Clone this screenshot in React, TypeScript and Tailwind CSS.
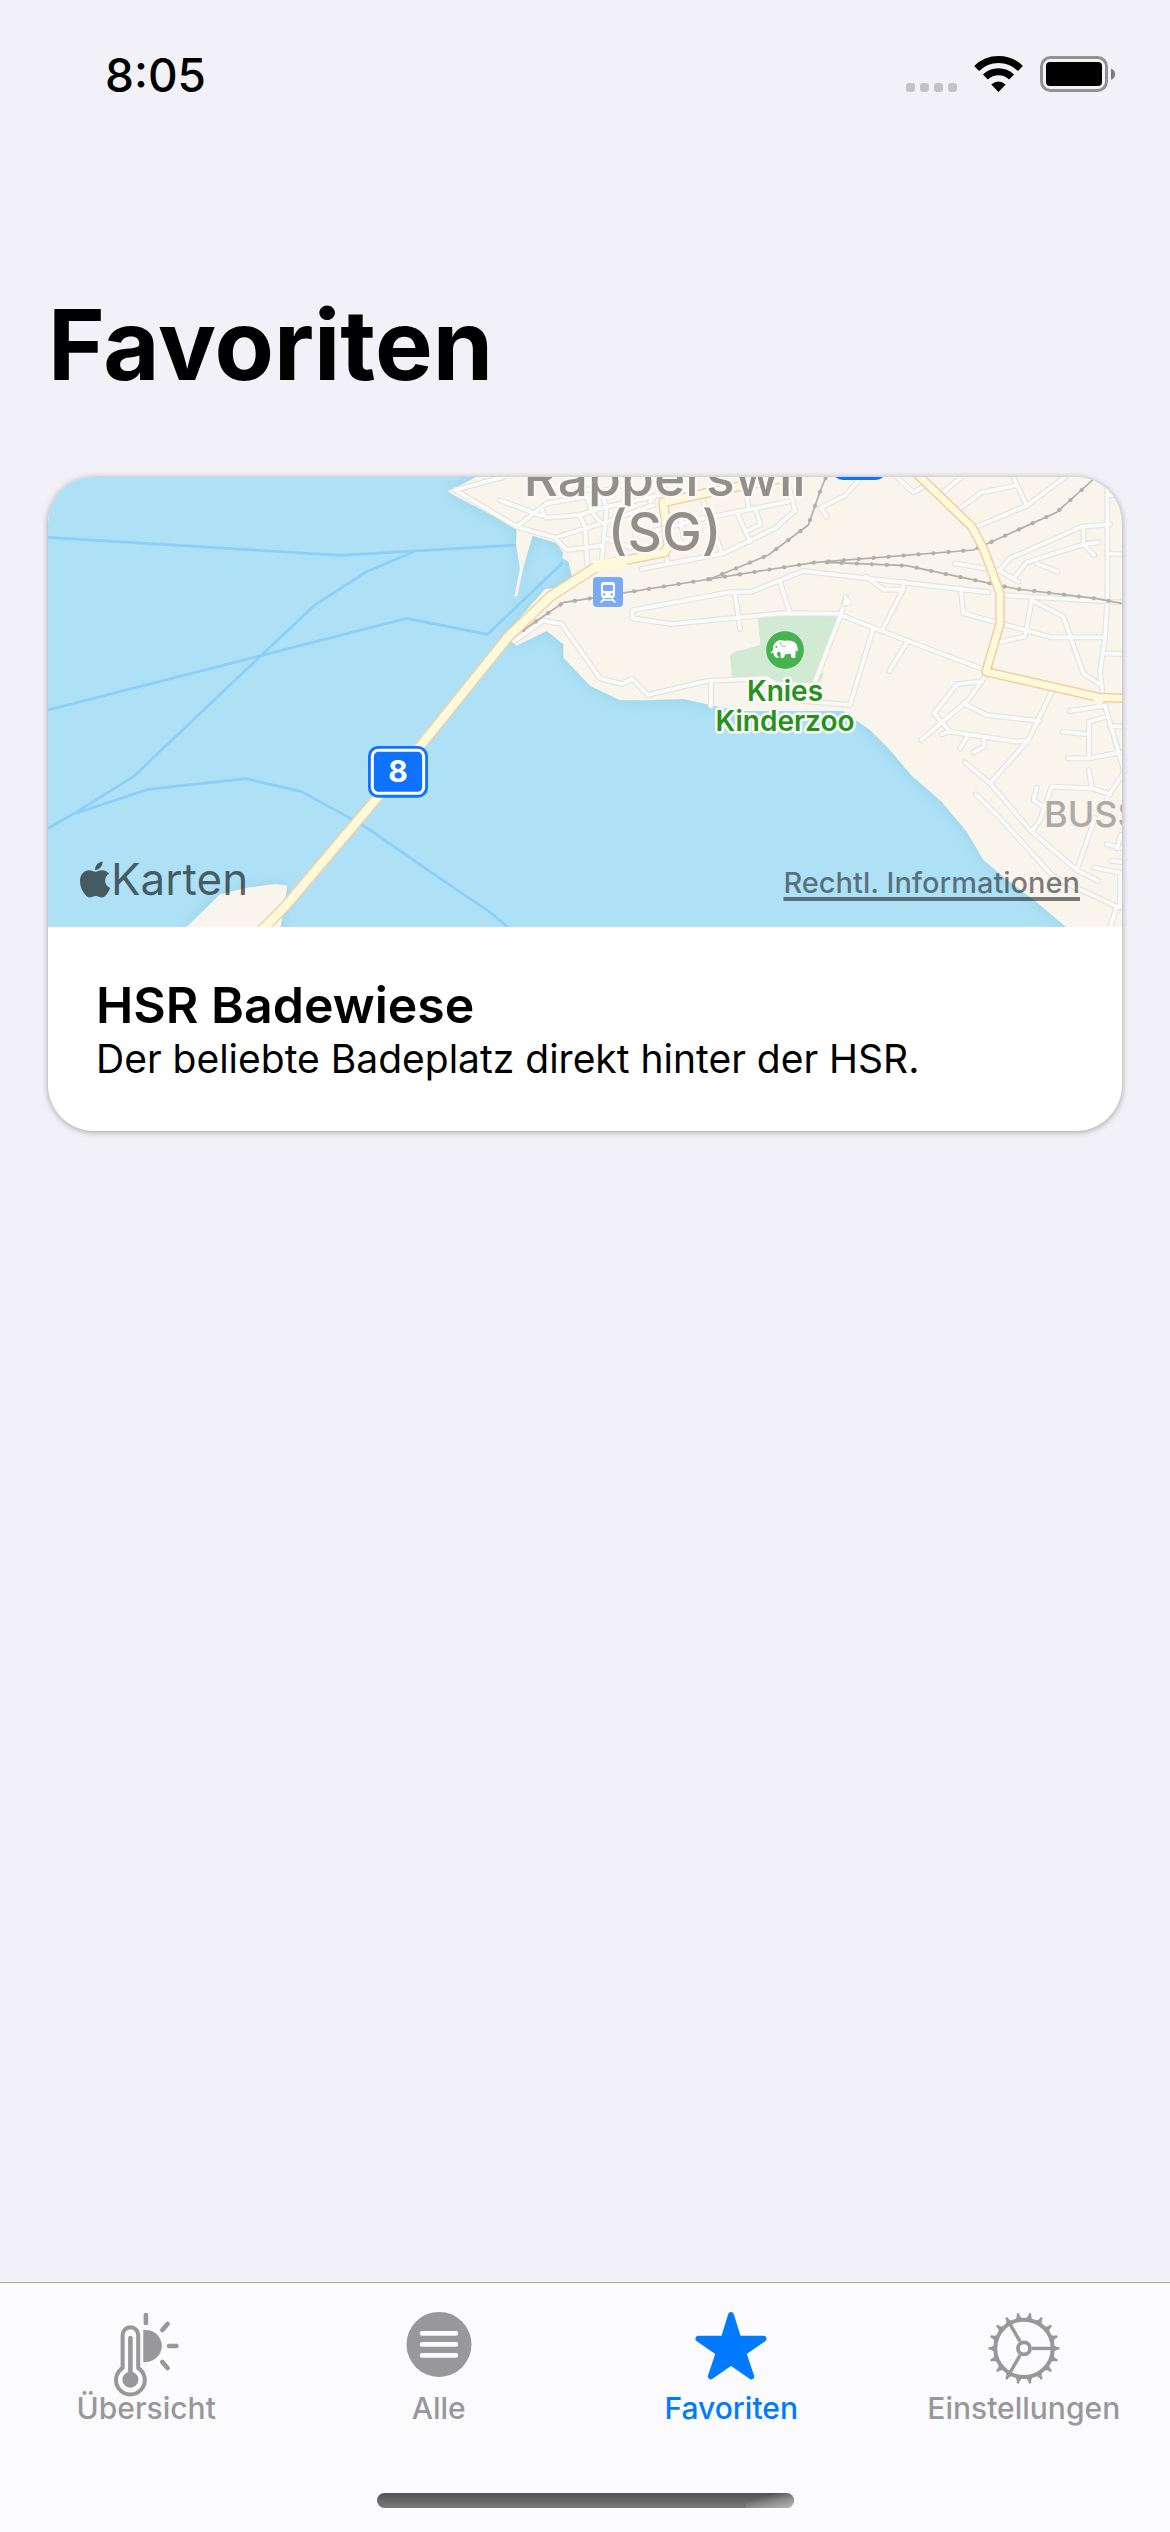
import type { ReactNode } from "react";
import { FaApple } from "react-icons/fa";

const MINOR_ROADS_CENTRE =
  "M250 36L105 75L290 185L405 218L440 255L545 242 M240 106L365 152 M290 185L380 115L500 95L620 55 M365 135L378 158L478 150L560 125L720 90 M478 150L495 185L502 300 M405 218L560 170L700 120 M500 90L515 140L540 170 M480 60L550 100L560 130L545 290 M555 220L640 250 M665 312L910 265L1065 190L1125 137L1105 60 M845 95L905 262 M880 155L1105 110 M950 140L990 230 M1005 130L1022 178L980 198 M975 60L985 125 M735 265L745 295 M780 150L790 215 M690 200L850 160 M690 110L760 36 M640 150L650 250 M283 528L370 467L425 477L540 640L605 657L637 642L683 690L860 648L1040 640L1065 655 M873 650L873 722 M1705 382L1150 318L995 380L925 382L637 436L637 460L755 477L1085 445L1262 446 M945 385L960 492 M1080 350L1108 440";

const MINOR_ROADS_EAST =
  "M228 396L212 450L120 690 M212 450L335 498L645 615 M288 335L342 374L400 374 M400 350L400 372L335 498 M310 488L240 720L100 708 M412 530L358 618 M572 370L580 445L690 475L845 517L1005 517 M690 390L1060 412 M785 405L765 515L690 530 M785 405L880 455L940 625L992 660 M1012 30L1012 410L1005 520L990 620L998 690 M1020 90L1060 90 M1012 265L1060 268 M1003 565L1060 567 M620 185L770 122L885 36 M770 122L730 36 M570 130L635 82L735 62 M515 85L575 36 M380 36L430 82L470 60 M275 36L225 92L152 128L170 155 M690 315L720 280L935 185L1020 178 M940 185L940 238L770 292L735 335 M940 238L985 232 M940 238L973 270 M800 295L863 320 M555 295L690 318L745 350 M648 630L595 705L453 825 M635 650L562 657L492 745L540 800 M515 808L540 800L740 830L775 825L850 670 M580 715L650 750L808 768 M592 815L570 850 M642 820L642 845L610 862 M775 825L660 955 M585 892L660 955L785 1100L920 1215L985 1248 M618 988L700 1070L850 1235L1040 1325L1020 1390 M1040 1325L1060 1328 M800 968L790 1005L820 1025 M785 1100L810 1065L845 965L965 970L1020 988 M957 915L965 970 M1060 925L1010 1000 M975 1060L920 1215 M1010 1138L1060 1150 M1052 1110L1042 1150 M1025 1188L1060 1192 M972 1208L1060 1225 M1050 1225L1050 1320 M900 738L1005 722L1060 910 M957 880L957 770L1010 755 M877 800L957 808 M893 880L957 880L1050 862 M1020 783L1060 785";

const LAND =
  "M180 30L105 68L82 78L100 90L290 190L288 240L300 310L283 395L292 392L312 300L338 212L410 235L430 265L427 280L445 290L456 335L410 368L375 372L255 510L290 542L380 498L430 538L430 578L510 662L600 706L680 706L790 702L880 722L960 738L1270 738L1350 795L1405 850L1475 932L1565 1010L1640 1100L1690 1185L1750 1235L1850 1312L1945 1392L2120 1392L2120 30Z";

const ISLAND = "M-706 1392L-600 1288L-520 1268L-435 1257L-398 1262L-419 1392Z";

const RAILS =
  "M310 495L430 413L870 342L1045 270L1165 180L1200 80L1218 36 M870 342L1180 293L1660 255L1910 142L2018 45 M1220 292L1460 302L1710 355L1790 372L2025 400L2106 415";

const FERRIES =
  "M-1116 217L-240 271L288 240 M-22 262L-160 320L-318 422L-475 570L-860 935L-1032 1042L-1116 1090 M-1116 735L-40 460L203 508L428 293 M-1032 1045L-815 973L-522 941L-355 980L-175 1078L60 1240L212 1343L270 1392";

function RoadShield() {
  return (
    <g>
      <rect x="-156" y="843" width="180" height="155" rx="30" fill="#0f73ff" />
      <rect x="-143" y="856" width="154" height="129" rx="18" fill="none" stroke="#fff" strokeWidth="9" />
      <text x="-66" y="951" textAnchor="middle" fontSize="90" fontWeight="700" fill="#fff">8</text>
    </g>
  );
}

function MapView() {
  return (
    <div className="relative h-[450px] overflow-hidden bg-[#aee1f6]">
      <svg
        className="h-full w-full"
        viewBox="-1116 36 3222 1350"
        preserveAspectRatio="xMidYMid slice"
        fontFamily="Inter, 'Liberation Sans', sans-serif"
        role="img"
        aria-label="Karte von Rapperswil (SG)"
      >
        <defs>
          <filter id="shore" x="-10%" y="-10%" width="120%" height="120%">
            <feGaussianBlur stdDeviation="22" />
          </filter>
        </defs>
        <path d={LAND + ISLAND} fill="#8fcfe0" opacity="0.75" filter="url(#shore)" />
        <path d={FERRIES} fill="none" stroke="#8dcff7" strokeWidth="8" strokeLinejoin="round" />
        <path d={LAND + ISLAND} fill="#f9f4ec" />
        <path d="M1012 455L1256 450L1180 655L1060 650L1040 636L936 640L930 572L945 560L1022 540Z M1200 625L1211 625L1200 652L1188 652Z" fill="#d0ead3" />
        <g fill="none" strokeLinecap="round" strokeLinejoin="round">
          <g stroke="#e6e4de" strokeWidth="18">
            <path d={MINOR_ROADS_CENTRE} />
            <path d={MINOR_ROADS_EAST} transform="translate(1050 0)" />
          </g>
          <g stroke="#fafaf9" strokeWidth="11">
            <path d={MINOR_ROADS_CENTRE} />
            <path d={MINOR_ROADS_EAST} transform="translate(1050 0)" />
          </g>
        </g>
        <path d="M1272 385L1296 410L1290 420L1268 424Z" fill="#fafaf9" stroke="#e6e4de" strokeWidth="3" />
        <path d={RAILS} fill="none" stroke="#b0afac" strokeWidth="5" />
        <path d={RAILS} fill="none" stroke="#b0afac" strokeWidth="12" strokeLinecap="round" strokeDasharray="1 44" />
        <g fill="none" strokeLinejoin="round">
          <g stroke="#f5cda5">
            <path d="M-480 1400L-405 1325L-130 1000L5 838L265 515L390 395L530 305" strokeWidth="33" />
            <path d="M390 395L530 303L735 262L745 240L730 112L900 75L1110 36" strokeWidth="30" />
            <path d="M1490 26L1655 185L1690 250L1740 385L1740 475L1698 620L2035 697L2110 700" strokeWidth="29" />
          </g>
          <g stroke="#fdfadb">
            <path d="M-480 1400L-405 1325L-130 1000L5 838L265 515L390 395L530 305" strokeWidth="25" />
            <path d="M390 395L530 303L735 262L745 240L730 112L900 75L1110 36" strokeWidth="22" />
            <path d="M520 305L620 290" strokeWidth="34" />
            <path d="M1490 26L1655 185L1690 250L1740 385L1740 475L1698 620L2035 697L2110 700" strokeWidth="20" />
            <path d="M2020 700L2050 700L2042 716L2030 716Z" strokeWidth="6" fill="#fdfadb" />
          </g>
        </g>
        <rect x="1238" y="-110" width="160" height="155" rx="30" fill="#0f73ff" />
        <RoadShield />
        <g>
          <rect x="519" y="336" width="90" height="90" rx="12" fill="#79aaf2" />
          <rect x="543" y="351" width="42" height="48" rx="9" fill="#fff" />
          <rect x="549" y="360" width="30" height="18" rx="2" fill="#79aaf2" />
          <path d="M549 388H557M571 388H579" stroke="#79aaf2" strokeWidth="5" />
          <path d="M553 400L542 413M575 400L586 413M548 405H581" fill="none" stroke="#fff" strokeWidth="5" />
        </g>
        <circle cx="1095" cy="555" r="58" fill="#44b350" stroke="#fff" strokeWidth="2" />
        <path
          d="M1050 563L1058 558L1060 542Q1066 529 1080 525L1094 527Q1122 524 1131 540L1134 557L1130 560L1127 552L1126 579L1115 579L1112 566L1095 568L1092 579L1082 579L1082 564Q1076 557 1072 562Q1068 572 1078 575L1073 579Q1062 577 1060 564Z"
          fill="#fff"
        />
        <path d="M1080 531Q1086 548 1097 544" fill="none" stroke="#44b350" strokeWidth="2" />
        <circle cx="1069" cy="545" r="3" fill="#44b350" />
        <g paintOrder="stroke" strokeLinejoin="round" stroke="#fbf9f5" strokeWidth="15" textAnchor="middle">
          <g fill="#958f89" fontSize="160" fontWeight="500">
            <text x="734" y="94">Rapperswil</text>
            <text x="734" y="258">(SG)</text>
          </g>
          <g fill="#27911f" fontSize="84" fontWeight="600">
            <text x="1095" y="708">Knies</text>
            <text x="1095" y="797">Kinderzoo</text>
          </g>
        </g>
        <text x="1872" y="1087" fontSize="108" fontWeight="500" fill="#adaba7" stroke="#f9f4ec" strokeWidth="10" paintOrder="stroke">BUSSKIRCH</text>
      </svg>
      <div className="absolute bottom-5 left-[31px] flex items-center text-[44px] leading-[56px] text-black/60">
        <FaApple className="h-[41px] w-8" />
        <span>Karten</span>
      </div>
      <a
        href="#rechtliches"
        className="absolute right-[42px] bottom-[26px] text-[29px] leading-9 font-medium text-black/50 underline decoration-4 underline-offset-4"
      >
        Rechtl. Informationen
      </a>
    </div>
  );
}

function ThermometerSunIcon() {
  return (
    <svg className="size-24" viewBox="0 0 96 96" fill="none" stroke="currentColor" strokeLinecap="round" aria-hidden="true">
      <path d="M24.6 62V29a7.8 7.8 0 0 1 15.6 0V62A14.4 14.4 0 1 1 24.6 62Z" strokeWidth="4" strokeLinejoin="round" />
      <path d="M32.4 32V72" strokeWidth="4.6" />
      <circle cx="32.4" cy="73.7" r="8" fill="currentColor" stroke="none" />
      <path d="M45.3 24.1A16 16 0 1 1 45.3 55.7Z" fill="currentColor" stroke="none" />
      <path d="M47.9 9V17M71 40H78.4M64.3 24L69.6 18M64.3 56L69.6 62" strokeWidth="4.6" />
    </svg>
  );
}

function ListCircleIcon() {
  return (
    <svg className="size-24" viewBox="0 0 96 96" aria-hidden="true">
      <circle cx="48" cy="38.4" r="32.5" fill="currentColor" />
      <path d="M31 27.4H65M31 38.4H65M31 49.4H65" stroke="#fbfbfd" strokeWidth="4.6" strokeLinecap="round" />
    </svg>
  );
}

function StarIcon() {
  return (
    <svg className="size-24" viewBox="0 0 96 96" fill="currentColor" stroke="currentColor" strokeWidth="6" strokeLinejoin="round" aria-hidden="true">
      <path d="M48 9L55.2 32.7H80.5L60.2 46.8L68.2 70.4L48 56.3L27.8 70.4L35.8 46.8L15.5 32.7H40.8Z" />
    </svg>
  );
}

const TEETH = Array.from({ length: 18 }, (_, i) => i * 20);

function GearIcon() {
  return (
    <svg className="size-24" viewBox="0 0 96 96" fill="none" stroke="currentColor" aria-hidden="true">
      <circle cx="48" cy="42.4" r="28.7" strokeWidth="4" />
      <circle cx="48" cy="42.4" r="6" strokeWidth="3.8" />
      {[0, 120, 240].map((angle) => (
        <path key={angle} d="M56 42.4H76" strokeWidth="3.4" transform={`rotate(${angle} 48 42.4)`} />
      ))}
      {TEETH.map((angle) => (
        <path
          key={angle}
          d="M77.5 38.9L80.5 40.8L83.2 41.2Q84.6 42.4 83.2 43.6L80.5 44L77.5 45.9Z"
          fill="currentColor"
          stroke="none"
          transform={`rotate(${angle} 48 42.4)`}
        />
      ))}
    </svg>
  );
}

function Tab({ label, icon, active = false }: { label: string; icon: ReactNode; active?: boolean }) {
  return (
    <button
      type="button"
      aria-current={active ? "page" : undefined}
      className={`flex flex-1 flex-col items-center ${active ? "text-[#007aff]" : "text-[#98989b]"}`}
    >
      {icon}
      <span className="-mt-3 text-[30px] leading-9 font-medium">{label}</span>
    </button>
  );
}

function StatusBar() {
  return (
    <header className="flex h-[141px] items-start justify-between pt-[50px] pr-[54px] pl-[105px]">
      <time className="text-[46px] leading-[50px] font-medium">8:05</time>
      <div className="flex items-end gap-[17px] pt-1">
        <div className="flex gap-[5px] pb-[2px]">
          {[0, 1, 2, 3].map((dot) => (
            <span key={dot} className="size-[9px] rounded-[3px] bg-[#c3c2c8]" />
          ))}
        </div>
        <svg className="h-10 w-[49px]" viewBox="0 0 49 40" aria-label="WLAN">
          <g fill="none" stroke="#000" strokeWidth="7">
            <path d="M2.6 14.4A31.2 31.2 0 0 1 46.4 14.4" />
            <path d="M11.4 23.1A18.8 18.8 0 0 1 37.6 23.1" />
          </g>
          <path d="M24.5 38L17.3 30.4Q24.5 24.4 31.7 30.4Z" />
        </svg>
        <svg className="h-10 w-[76px]" viewBox="0 0 76 40" aria-label="Batterie voll">
          <rect x="1.5" y="3.5" width="65" height="33" rx="9" fill="none" stroke="#929195" strokeWidth="3" />
          <rect x="6" y="8" width="56" height="24" rx="4" />
          <path d="M71 14.5Q75 16 75 20.3T71 26Z" fill="#7d7c80" />
        </svg>
      </div>
    </header>
  );
}

export default function App() {
  return (
    <div className="flex min-h-screen flex-col bg-[#f2f1f7] font-[Inter,'Liberation_Sans',sans-serif] text-black">
      <StatusBar />
      <main className="flex-1 px-12 pt-[140px]">
        <h1 className="text-[97px] leading-[128px] font-bold">Favoriten</h1>
        <article className="mt-[68px] overflow-hidden rounded-[46px] bg-white shadow-[0_1px_6px_rgba(0,0,0,0.35)]">
          <MapView />
          <div className="px-12 pt-12 pb-12">
            <h2 className="text-[50px] leading-[60px] font-semibold">HSR Badewiese</h2>
            <p className="text-[39px] leading-[48px]">Der beliebte Badeplatz direkt hinter der HSR.</p>
          </div>
        </article>
      </main>
      <nav className="border-t border-[#a8a8ac] bg-[#fbfbfd]" aria-label="Hauptnavigation">
        <div className="flex pt-[23px]">
          <Tab label="Übersicht" icon={<ThermometerSunIcon />} />
          <Tab label="Alle" icon={<ListCircleIcon />} />
          <Tab label="Favoriten" icon={<StarIcon />} active />
          <Tab label="Einstellungen" icon={<GearIcon />} />
        </div>
        <div className="flex justify-center pt-[67px] pb-6">
          <div className="h-[15px] w-[417px] overflow-hidden rounded-full bg-linear-to-b from-[#525252] to-[#7b7b7b]">
            <div className="ml-auto h-full w-12 bg-linear-to-br from-transparent from-30% to-[#b8b8b8]" />
          </div>
        </div>
      </nav>
    </div>
  );
}
